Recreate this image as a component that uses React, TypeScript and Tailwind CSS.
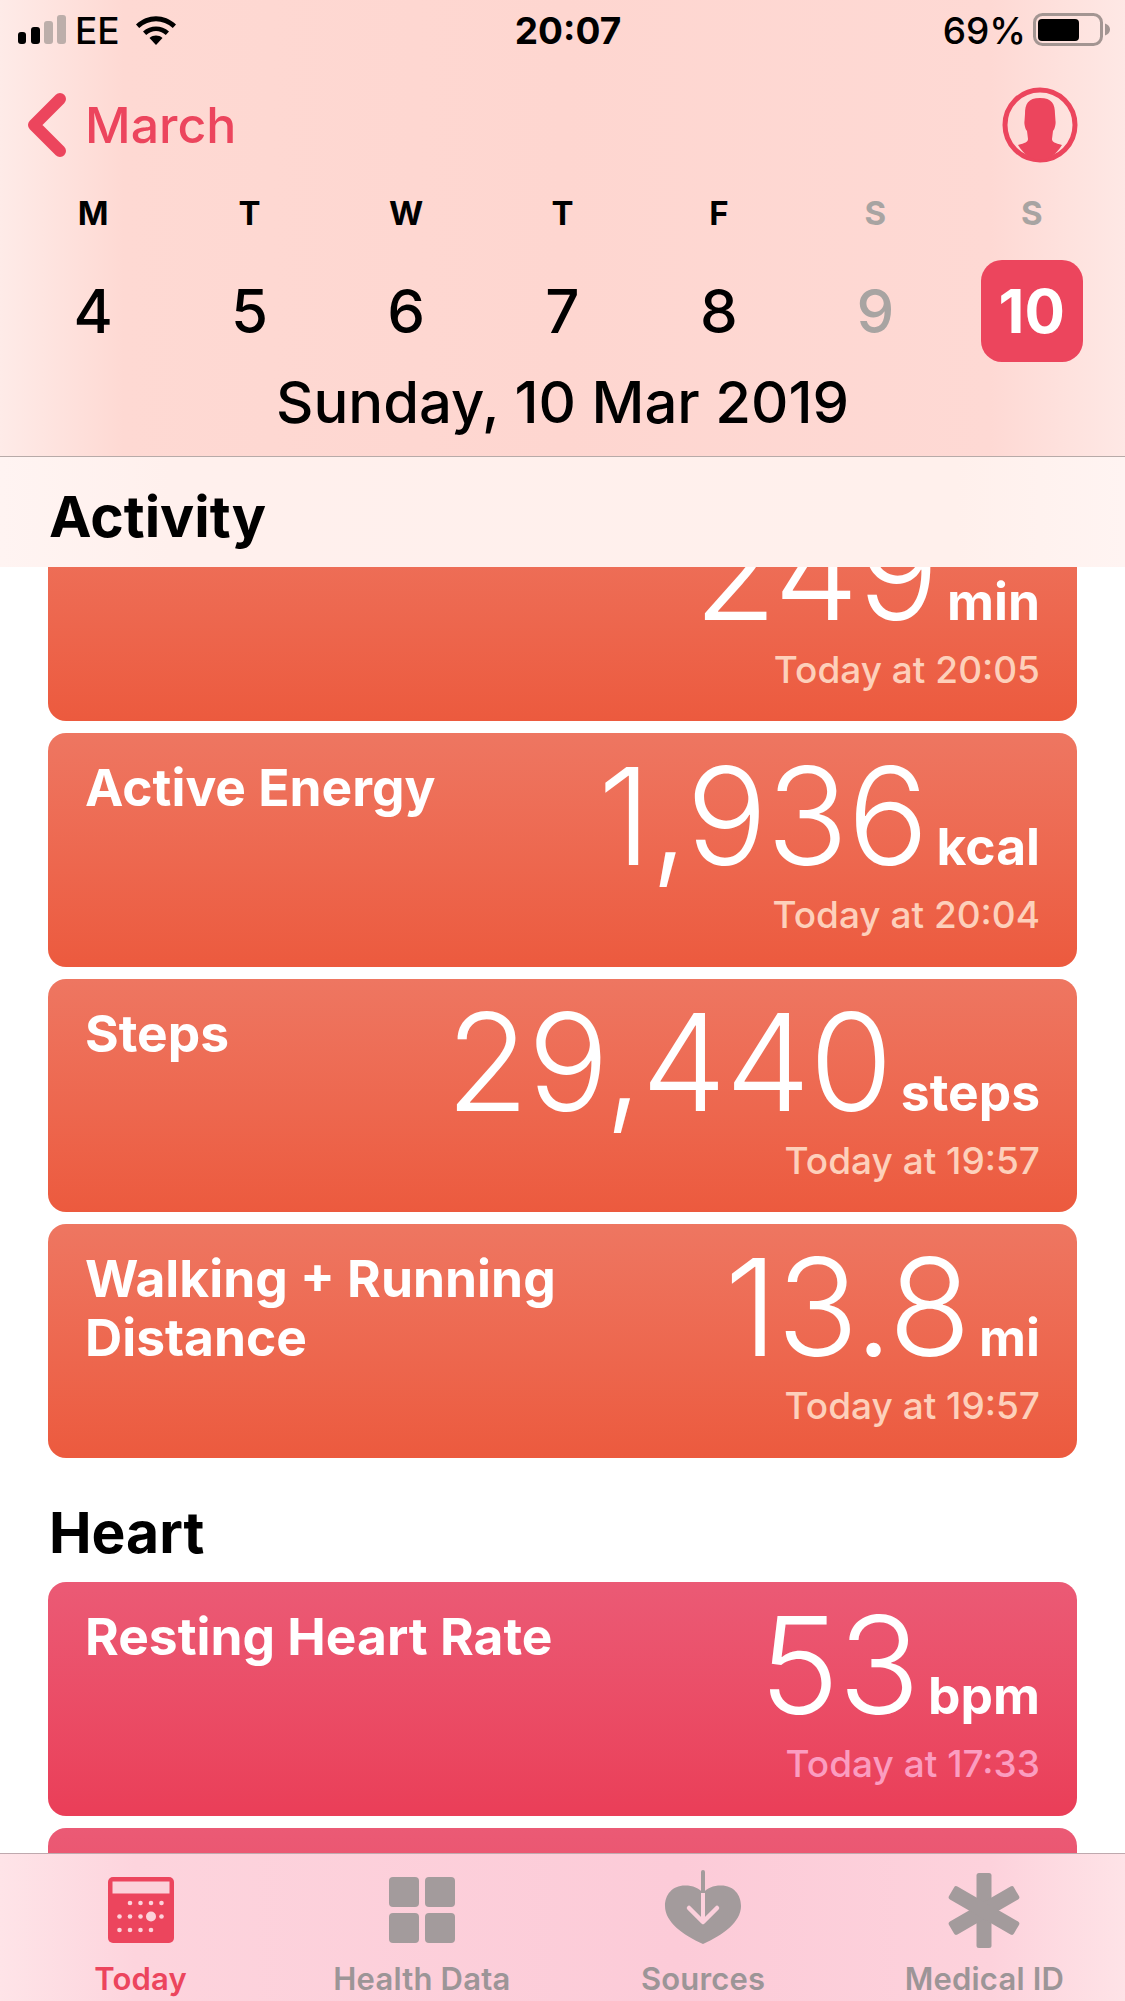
import React from 'react';

const font = "font-['Inter','Noto_Sans',sans-serif]";

interface Metric {
  title: React.ReactNode;
  value: string;
  unit: string;
  time: string;
}

const activity: Metric[] = [
  { title: 'Active Energy', value: '1,936', unit: 'kcal', time: 'Today at 20:04' },
  { title: 'Steps', value: '29,440', unit: 'steps', time: 'Today at 19:57' },
  {
    title: (
      <>
        Walking + Running
        <br />
        Distance
      </>
    ),
    value: '13.8',
    unit: 'mi',
    time: 'Today at 19:57',
  },
];

const days = [
  { letter: 'M', num: '4' },
  { letter: 'T', num: '5' },
  { letter: 'W', num: '6' },
  { letter: 'T', num: '7' },
  { letter: 'F', num: '8' },
  { letter: 'S', num: '9', muted: true },
  { letter: 'S', num: '10', muted: true, selected: true },
];

const MetricCard = ({ metric, heart, className = '' }: { metric: Metric; heart?: boolean; className?: string }) => (
  <div
    className={`flex h-[233.5px] shrink-0 justify-between rounded-[18px] px-[37px] text-white ${
      heart ? 'bg-linear-to-b from-[#eb5a75] to-[#ea3e58]' : 'bg-linear-to-b from-[#ee7661] to-[#ec5a3e]'
    } ${className}`}
  >
    <div className="pt-[25px] text-[51.5px] leading-[59px] font-bold">{metric.title}</div>
    <div className="flex flex-col items-end pt-[35px]">
      <div className="flex items-baseline gap-[9px] leading-[96px]">
        <span className="text-[135px] font-[350] tracking-[-1px]">{metric.value}</span>
        <span className="text-[51.5px] font-bold">{metric.unit}</span>
      </div>
      <div className={`text-[37px] leading-[41px] font-medium ${heart ? 'text-[#fb9dc0]' : 'text-[#fdd0bb]'}`}>
        {metric.time}
      </div>
    </div>
  </div>
);

const StatusBar = () => (
  <div className="relative flex h-[60px] items-start text-black">
    <svg className="mt-[15px] ml-[18px]" width="48" height="29" viewBox="0 0 48 29">
      <rect x="0" y="17" width="8" height="12" rx="3" fill="#000" />
      <rect x="13" y="12" width="9" height="17" rx="3" fill="#000" />
      <rect x="26" y="6" width="9" height="23" rx="3" fill="#bcaeaa" />
      <rect x="39" y="0" width="9" height="29" rx="3" fill="#bcaeaa" />
    </svg>
    <span className="mt-[10px] ml-[9px] text-[37px] leading-[42px] font-medium">EE</span>
    <svg className="mt-[15px] ml-[15px]" width="42" height="30" viewBox="0 0 42 30">
      <path d="M1 9.500 C12.500 -1.500 29.500 -1.500 41 9.500 L37.800 13 C28 4 14 4 4.200 13 Z" fill="#000" />
      <path d="M8 16.500 C15.500 9.800 26.500 9.800 34 16.500 L30.800 20 C24.500 14.800 17.500 14.800 11.200 20 Z" fill="#000" />
      <path d="M14.500 23 C18.500 19.800 23.500 19.800 27.500 23 L21 30 Z" fill="#000" />
    </svg>
    <span className="absolute top-[10px] left-0 w-[1136px] text-center text-[37px] leading-[42px] font-bold">20:07</span>
    <span className="mt-[10px] ml-auto text-[37px] leading-[42px] font-medium">69%</span>
    <svg className="mt-[13px] mr-[15px] ml-[7px]" width="77" height="33" viewBox="0 0 77 33">
      <rect x="1.500" y="1.500" width="67" height="30" rx="8" fill="none" stroke="#a39592" strokeWidth="3" />
      <rect x="5" y="6" width="41" height="22" rx="4" fill="#000" />
      <path d="M72 10.500 C75 11.500 77 13.500 77 16.500 C77 19.500 75 21.500 72 22.500 Z" fill="#a39592" />
    </svg>
  </div>
);

const CalendarHeader = () => (
  <div className="h-[457px] shrink-0 border-b border-[#b7aaa8] bg-[linear-gradient(90deg,#feebe8,#fed9d3_11%,#fed6d0_50%,#fed9d4_88%,#fee8e5)]">
    <StatusBar />
    <div className="relative flex h-[134px] items-start">
      <svg className="mt-[30px] ml-[26px]" width="42" height="70" viewBox="0 0 42 70">
        <path d="M34 9 L8 35 L34 61" fill="none" stroke="#ec455d" strokeWidth="12" strokeLinecap="round" strokeLinejoin="round" />
      </svg>
      <span className="mt-[36px] ml-[17px] text-[50px] leading-[58px] font-medium text-[#ec455d]">March</span>
      <svg className="mt-[27px] mr-[47px] ml-auto" width="76" height="76" viewBox="0 0 76 76">
        <circle cx="38" cy="38" r="35" fill="none" stroke="#ec455d" strokeWidth="5" />
        <path
          d="M38 11 C50 11 53 17 53 27 L53.500 34 C54 36 53 42 51 44 L50 52 C50 55 53 56 60 58 C54 68 46 73 38 73 C30 73 22 68 16 58 C23 56 26 55 26 52 L25 44 C23 42 22 36 22.500 34 L23 27 C23 17 26 11 38 11 Z"
          fill="#ec455d"
        />
      </svg>
    </div>
    <div className="grid grid-cols-7 px-[15px]">
      {days.map((day, i) => (
        <div key={i} className="flex flex-col items-center">
          <span className={`text-[33px] leading-[38px] font-bold ${day.muted ? 'text-[#a8a4a2]' : 'text-black'}`}>{day.letter}</span>
          <div
            className={`mt-[28px] flex h-[102px] w-[102px] items-center justify-center rounded-[21px] text-[60px] ${
              day.selected ? 'bg-[#ec455d] font-bold text-white' : day.muted ? 'font-medium text-[#a8a4a2]' : 'font-medium text-black'
            }`}
          >
            {day.num}
          </div>
        </div>
      ))}
    </div>
    <div className="mt-[6px] text-center text-[58px] leading-[68px] font-medium text-black">Sunday, 10 Mar 2019</div>
  </div>
);

const TodayIcon = () => (
  <svg width="80" height="80" viewBox="0 0 80 80">
    <rect x="7" y="7" width="66" height="66" rx="5" fill="#ec455d" />
    <rect x="11.500" y="11.500" width="57" height="12" fill="#fcd2da" />
    {[[29, 33], [39.500, 33], [50, 33], [60.500, 33], [18.500, 46.500], [29, 46.500], [39.500, 46.500], [60.500, 46.500], [18.500, 60], [29, 60], [39.500, 60], [50, 60]].map(([cx, cy]) => (
      <circle key={`${cx}-${cy}`} cx={cx} cy={cy} r="2.300" fill="#fcd2da" />
    ))}
    <circle cx="50" cy="46.500" r="5" fill="#fcd2da" />
  </svg>
);

const GridIcon = () => (
  <svg width="80" height="80" viewBox="0 0 80 80" fill="#a39b9c">
    <rect x="7" y="7" width="30" height="30" rx="4" />
    <rect x="43" y="7" width="30" height="30" rx="4" />
    <rect x="7" y="43" width="30" height="30" rx="4" />
    <rect x="43" y="43" width="30" height="30" rx="4" />
  </svg>
);

const SourcesIcon = () => (
  <svg width="80" height="80" viewBox="0 0 80 80">
    <path
      d="M40 23 C44 18 50 15.500 58 15.500 C71 15.500 78 25 78 36 C78 52 60 65 40 74 C20 65 2 52 2 36 C2 25 9 15.500 22 15.500 C30 15.500 36 18 40 23 Z"
      fill="#a39b9c"
    />
    <line x1="40" y1="2" x2="40" y2="23" stroke="#a39b9c" strokeWidth="4" strokeLinecap="round" />
    <line x1="40" y1="23" x2="40" y2="52" stroke="#fcd0dc" strokeWidth="4" />
    <path d="M26 38 L40 52 L54 38" fill="none" stroke="#fcd0dc" strokeWidth="4.500" strokeLinecap="round" strokeLinejoin="round" />
  </svg>
);

const MedicalIcon = () => (
  <svg width="80" height="80" viewBox="0 0 80 80" fill="#a39b9c">
    <rect x="32.500" y="3" width="15" height="75" rx="2.500" />
    <rect x="32.500" y="3" width="15" height="75" rx="2.500" transform="rotate(60 40 40.500)" />
    <rect x="32.500" y="3" width="15" height="75" rx="2.500" transform="rotate(-60 40 40.500)" />
  </svg>
);

const tabs = [
  { label: 'Today', icon: <TodayIcon />, active: true },
  { label: 'Health Data', icon: <GridIcon /> },
  { label: 'Sources', icon: <SourcesIcon /> },
  { label: 'Medical ID', icon: <MedicalIcon /> },
];

const TabBar = () => (
  <div className="grid h-[148px] shrink-0 grid-cols-4 border-t border-[#bfa9ae] bg-[linear-gradient(90deg,#fee4e8,#fdd4dd_12%,#fccbd8_60%,#fdd2dc_88%,#fee3e7)] pt-[16px]">
    {tabs.map((tab) => (
      <div key={tab.label} className="flex flex-col items-center">
        {tab.icon}
        <span className={`mt-[11px] text-[31px] leading-[36px] font-semibold tracking-[0.2px] ${tab.active ? 'text-[#ec455d]' : 'text-[#9c9597]'}`}>{tab.label}</span>
      </div>
    ))}
  </div>
);

export default function App() {
  return (
    <div className={`flex h-[2001px] w-[1125px] flex-col overflow-hidden bg-white ${font}`}>
      <CalendarHeader />
      <div className="flex h-[110px] shrink-0 items-center bg-[linear-gradient(90deg,#fff4f2,#fff0ed_15%,#fff0ec_85%,#fff4f2)] pt-[9px] pl-[49px] text-[57px] font-bold text-black">
        Activity
      </div>

      <div className="flex min-h-0 flex-1 flex-col overflow-hidden px-[48px]">
        {/* first card is scrolled partly under the section bar */}
        <div className="-mt-[79.5px] flex flex-col gap-[12px]">
          <MetricCard metric={{ title: '', value: '249', unit: 'min', time: 'Today at 20:05' }} />
          {activity.map((metric) => (
            <MetricCard key={metric.value} metric={metric} />
          ))}
        </div>
        <div className="mt-[41px] mb-[16.5px] h-[67px] pl-[1px] text-[57px] leading-[67px] font-bold text-black">Heart</div>
        <MetricCard heart metric={{ title: 'Resting Heart Rate', value: '53', unit: 'bpm', time: 'Today at 17:33' }} />
        <MetricCard heart className="mt-[12px]" metric={{ title: '', value: '', unit: '', time: '' }} />
      </div>

      <TabBar />
    </div>
  );
}
